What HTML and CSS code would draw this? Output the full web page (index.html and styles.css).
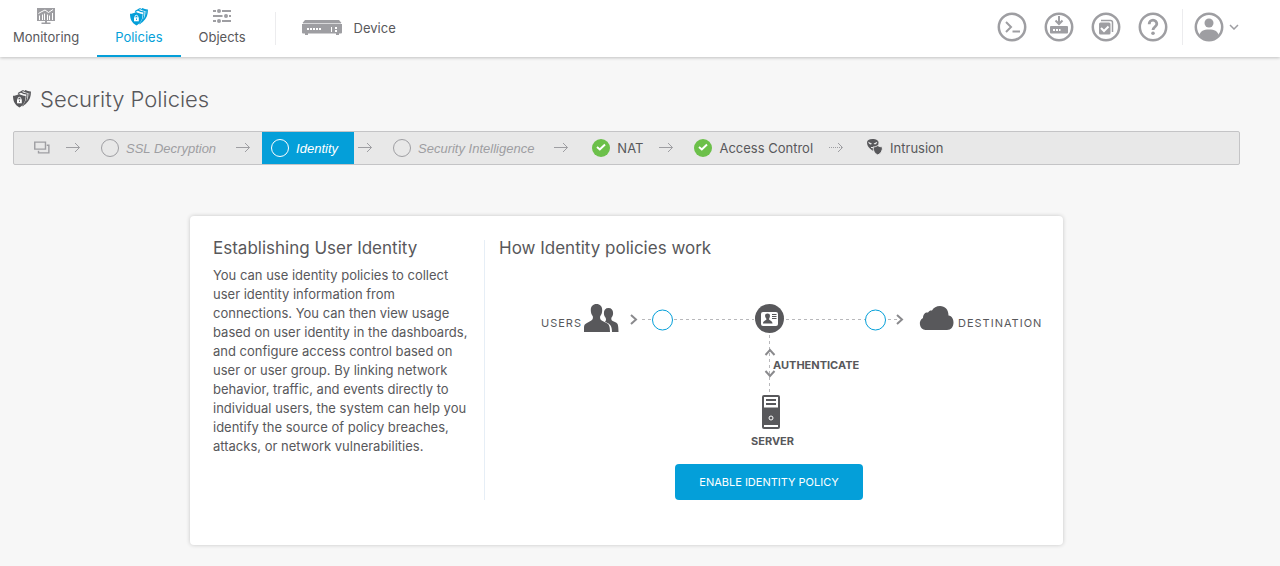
FILE: index.html
```html
<!DOCTYPE html>
<html lang="en">
<head>
<meta charset="utf-8">
<meta name="viewport" content="width=device-width, initial-scale=1">
<title>Security Policies</title>
<link rel="stylesheet" href="styles.css">
</head>
<body>
<svg class="sprite" aria-hidden="true">
  <symbol id="shields" viewBox="0 0 18 18">
    <path fill="currentColor" d="M6 4C4.200 5.200 2 5.700 0 5.800c0 5 1.500 9 6.400 11.600C11.200 15 12.600 11 12.600 6 10.200 5.800 8.200 5.200 6 4z"/>
    <path fill="none" stroke="currentColor" stroke-width="1.100" d="M5 3.400C6 3 7 2.600 7.800 2c2 1.300 4 1.800 6.200 2 0 5-.8 9-4.500 12M8 1.600c.8-.2 1.500-.6 2-1 1.800 1.200 3.700 1.800 6 2 .2 5-1.200 9-4.500 11.700M12 .600c2 1 3.500 1.400 5.400 1.500 0 4-.8 7-3.400 9.800"/>
    <path fill="none" stroke="#fff" stroke-width="1" d="M5 9.500V8.700a1.400 1.400 0 0 1 2.800 0v.8"/>
    <path fill="#fff" d="M4 9.300h4.800v4H4z"/>
    <path fill="currentColor" d="M6 10.500h.900v1.600H6z"/>
  </symbol>
  <symbol id="arrow" viewBox="0 0 14 10">
    <path fill="none" stroke="currentColor" d="M0 4.500h13.500M9 0l4.500 4.500L9 9"/>
  </symbol>
  <symbol id="check" viewBox="0 0 18 18">
    <circle cx="9" cy="9" r="9" fill="#6cc04a"/>
    <path fill="none" stroke="#fff" stroke-width="2" d="M5 8l2.800 2.400L13 5.500"/>
  </symbol>
  <symbol id="ring" viewBox="0 0 18 18">
    <circle cx="9" cy="9" r="8.500" fill="none" stroke="currentColor"/>
  </symbol>
</svg>

<header class="topbar">
  <nav class="nav" aria-label="Main">
    <a class="nav-item nav-first" href="#monitoring">
      <svg width="18" height="17" viewBox="0 0 18 17"><path fill="#9e9ea2" d="M0 0h18v13H0zM8 13h2v2H8zM4.500 14.500h9V16h-9z"/><path fill="none" stroke="#fff" stroke-width="1" d="M2.500 12V7.500M5.500 12V6.500M7.500 12V5.500M10.500 12V6.500M12.500 12V7.500M15.500 12V5"/><path fill="none" stroke="#fff" d="M1.500 5.500L4 4l4-2 3.500 2.500L16 1.500"/></svg>
      <span>Monitoring</span>
    </a>
    <a class="nav-item nav-active" href="#policies" aria-current="page">
      <svg width="18" height="18"><use href="#shields"/></svg>
      <span>Policies</span>
    </a>
    <a class="nav-item" href="#objects">
      <svg width="18" height="17" viewBox="0 0 18 17"><g stroke="#9e9ea2" stroke-width="2"><path d="M0 3h3M9 3h9M0 8h9.500M16 8h2M0 13h3M9 13h9"/></g><g fill="#9e9ea2"><circle cx="6" cy="3" r="2"/><circle cx="13" cy="8" r="2"/><circle cx="6" cy="13" r="2"/></g></svg>
      <span>Objects</span>
    </a>
  </nav>
  <a class="device" href="#device">
    <svg width="40" height="18" viewBox="0 0 40 18"><path fill="#9e9ea2" d="M3 0h34l2.500 3H.500zM0 4h40v8.500a1 1 0 0 1-1 1H1a1 1 0 0 1-1-1zM3 13h3v2H3zM34 13h3v2h-3z"/><path fill="#d8d8da" d="M1 3h38v1H1z"/><path stroke="#fff" stroke-width="2" stroke-dasharray="2 1" d="M5 9h14"/><path fill="#fff" d="M29 7h1v5h-1zM33 7h2v2h-2zM33 10h2v2h-2z"/></svg>
    <span>Device</span>
  </a>
  <div class="tools">
    <button class="tool" type="button" aria-label="CLI console"><svg width="30" height="30" viewBox="0 0 30 30"><circle class="rim" cx="15" cy="15" r="13.200"/><path fill="none" stroke="#9e9ea2" stroke-width="2" d="M9 10l5 5-5 5M15.500 19.500H23"/></svg></button>
    <button class="tool" type="button" aria-label="Deployment"><svg width="30" height="30" viewBox="0 0 30 30"><circle class="rim" cx="15" cy="15" r="13.200"/><rect x="6" y="14" width="18" height="7.500" rx="1" fill="#9e9ea2"/><path fill="none" stroke="#9e9ea2" stroke-width="2" d="M15 4v7.500M11.500 8.500l3.500 3.500 3.500-3.500"/><path fill="#fff" d="M9 17h2v2H9zM12 17h2v2h-2zM15 17h1.500v2H15z"/></svg></button>
    <button class="tool" type="button" aria-label="Task list"><svg width="30" height="30" viewBox="0 0 30 30"><circle class="rim" cx="15" cy="15" r="13.200"/><rect x="8" y="10.500" width="11.500" height="12" rx="1.500" fill="#9e9ea2"/><path fill="none" stroke="#9e9ea2" stroke-width="1.500" d="M10 8.500h9.500a2 2 0 0 1 2 2V20"/><path fill="none" stroke="#fff" stroke-width="2" d="M10 16l3 3 4.500-4.500"/></svg></button>
    <button class="tool" type="button" aria-label="Help"><svg width="30" height="30" viewBox="0 0 30 30"><circle class="rim" cx="15" cy="15" r="13.200"/><path fill="none" stroke="#9e9ea2" stroke-width="2.800" d="M11.200 12.200V12a3.800 3.800 0 0 1 7.600 0c0 2.500-3.800 3-3.800 6"/><circle cx="15" cy="21.200" r="1.800" fill="#9e9ea2"/></svg></button>
    <button class="tool account" type="button" aria-label="Account"><svg width="30" height="30" viewBox="0 0 30 30"><circle cx="15" cy="11" r="4.500" fill="#9e9ea2"/><path fill="#9e9ea2" d="M5.500 23c1-4 4-5.500 9.500-5.500s8.500 1.500 9.500 5.500c-2 3-6 5-9.500 5s-7.500-2-9.500-5z"/><circle class="rim" cx="15" cy="15" r="13.200"/></svg><svg width="10" height="6" viewBox="0 0 10 6"><path fill="none" stroke="#9e9ea2" stroke-width="1.500" d="M1 1l4 4 4-4"/></svg></button>
  </div>
</header>

<main class="page">
  <h1 class="title"><svg width="18" height="18"><use href="#shields"/></svg><span>Security Policies</span></h1>

  <ol class="steps">
    <li class="step"><svg class="muted" width="16" height="14" viewBox="0 0 17 14"><g fill="none" stroke="currentColor" stroke-width="1.500"><path d="M.800.800h11.400v7.400H.800z"/><path d="M13.500 4h2.300v8.200H4.800V10"/></g></svg></li>
    <li class="arrow"><svg width="14" height="10"><use href="#arrow"/></svg></li>
    <li class="step step-off"><a class="step-link" href="#ssl"><svg width="18" height="18"><use href="#ring"/></svg><span>SSL Decryption</span></a></li>
    <li class="arrow"><svg width="14" height="10"><use href="#arrow"/></svg></li>
    <li class="step step-off current"><a class="step-link" href="#identity" aria-current="step"><svg width="18" height="18"><use href="#ring"/></svg><span>Identity</span></a></li>
    <li class="arrow"><svg width="14" height="10"><use href="#arrow"/></svg></li>
    <li class="step step-off"><a class="step-link" href="#intelligence"><svg width="18" height="18"><use href="#ring"/></svg><span>Security Intelligence</span></a></li>
    <li class="arrow"><svg width="14" height="10"><use href="#arrow"/></svg></li>
    <li class="step step-on"><a class="step-link" href="#nat"><svg width="18" height="18"><use href="#check"/></svg><span>NAT</span></a></li>
    <li class="arrow"><svg width="14" height="10"><use href="#arrow"/></svg></li>
    <li class="step"><a class="step-link" href="#access"><svg width="18" height="18"><use href="#check"/></svg><span>Access Control</span></a></li>
    <li class="arrow"><svg width="14" height="10" viewBox="0 0 14 10"><path fill="none" stroke="currentColor" stroke-dasharray="1 1" d="M0 4.500h13"/><path fill="none" stroke="currentColor" d="M9 0l4.500 4.500L9 9"/></svg></li>
    <li class="step step-on"><a class="step-link" href="#intrusion"><svg width="16" height="20" viewBox="0 0 16 20"><path fill="#58585b" d="M5.500 1C9 1 11.500 2.500 11.500 4.500c0 3.500-1.500 6-5 8.500C2.500 11 0 8 0 4.500 0 2.500 2 1 5.500 1z"/><path fill="#e8e8e8" d="M1.200 3.800l3.600 1.700c0 1.300-3 1.500-3.600-1.700zM10.300 3.800L6.700 5.500c0 1.300 3 1.500 3.600-1.700zM4 9h3v1H4z"/><path fill="#58585b" stroke="#e8e8e8" d="M10.800 7.500c1.500 1 2.700 1.300 4.700 1.500 0 4-1.500 6.500-4.700 8-3.300-1.500-4.700-4-4.700-8 2-.2 3.200-.5 4.700-1.500z"/></svg><span>Intrusion</span></a></li>
  </ol>

  <section class="card">
    <div class="about">
      <h2>Establishing User Identity</h2>
      <p>You can use identity policies to collect user identity information from connections. You can then view usage based on user identity in the dashboards, and configure access control based on user or user group. By linking network behavior, traffic, and events directly to individual users, the system can help you identify the source of policy breaches, attacks, or network vulnerabilities.</p>
    </div>
    <div class="how">
      <h2>How Identity policies work</h2>
      <div class="diagram">
        <svg class="art" width="540" height="140" viewBox="0 0 540 140" aria-hidden="true">
          <g fill="#58585b">
            <path d="M108.500 7c3 0 4.600 2 4.600 5 0 2-.7 3.500-1.700 4.700-.3 1.600.1 2.600 1.300 3.200l3.300 1.600c1.800.9 2.500 2.500 2.500 9.500H112c0-5.500-1.500-7.500-4-8.800l-3-1.500c1-.9 1.400-2.400.6-4-1-1.200-1.700-2.700-1.700-4.700 0-3 1.600-5 4.600-5z"/>
            <path d="M96.500 3c3.600 0 5.700 2.300 5.700 6.200 0 2.500-.8 4.500-2 6-.5 2.300.2 3.700 1.900 4.500l4.400 2.300c2.500 1.300 3.500 3 3.500 9H84v-4.500c0-2.300.8-3.400 2.500-4.200l4.400-2.600c1.700-.8 2.400-2.200 1.900-4.500-1.200-1.500-2-3.500-2-6C90.800 5.300 92.900 3 96.500 3z"/>
            <circle cx="269.500" cy="17.500" r="14.500"/>
            <path d="M425.500 29a6.500 6.500 0 0 1-2.500-12c0-4 2.500-6 5-5.500 1-1.800 2.500-2.300 4-2 1.500-3 4.500-4.500 8-4.500 5 0 8.500 3.500 8.500 9.500 3.500.5 5 3.500 5 7 0 4.500-2.500 7.500-6.500 7.500z"/>
            <rect x="262" y="94" width="18" height="34" rx="2"/>
          </g>
          <rect x="261" y="11" width="17" height="14" rx="2" fill="#fff"/>
          <path fill="#58585b" d="M267.500 12.500c3 0 3 3 1.500 5.500 0 1.500 3.500 1.500 3.500 4.500h-9.500c0-3 3.500-3 3.500-4.500-2-2.500-2-5.500 1-5.500zM272 13h4.500v1H272zM272 15h4.500v1H272zM272 17h4.500v1H272z"/>
          <path fill="#fff" d="M264 96h14v10.500h-14zM264 124h14v2h-14z"/>
          <path fill="#58585b" d="M266 98h10v2h-10zM266 102h10v2h-10z"/>
          <circle cx="271" cy="117" r="2" fill="none" stroke="#fff"/>
          <g fill="none" stroke="#b8b8bb" stroke-dasharray="3 3"><path d="M142 18.500h10M174 18.500h80M286 18.500h79M388 18.500h9M269.500 34v60"/></g>
          <g fill="none" stroke="#8a8a8d" stroke-width="2"><path d="M131 14l5 4.500-5 4.500M397 14l5 4.500-5 4.500M265.500 54l4.500-5 4.500 5M265.500 70l4.500 5 4.500-5"/></g>
          <g fill="#fff" stroke="#049fd9"><circle cx="162.500" cy="19" r="10"/><circle cx="375.500" cy="19" r="10"/></g>
        </svg>
        <span class="label users">USERS</span>
        <span class="label destination">DESTINATION</span>
        <strong class="label authenticate">AUTHENTICATE</strong>
        <strong class="label server">SERVER</strong>
        <button class="enable" type="button">ENABLE IDENTITY POLICY</button>
      </div>
    </div>
  </section>
</main>
</body>
</html>
```
FILE: styles.css
```css
* { box-sizing: border-box; }

body {
  margin: 0;
  background: #f7f7f7;
  color: #58585b;
  font: 13px/19px Inter, "Liberation Sans", sans-serif;
}

svg { display: block; flex: none; }
a { color: inherit; text-decoration: none; }
button { font: inherit; border: 0; padding: 0; background: none; cursor: pointer; }
h1, h2, p, ol { margin: 0; padding: 0; font-weight: 400; }
.sprite { position: absolute; width: 0; height: 0; }

.topbar {
  display: flex;
  align-items: center;
  height: 57px;
  padding: 0 41px 0 13px;
  background: #fff;
  box-shadow: 0 1px 3px rgba(0, 0, 0, 0.22);
}
.nav { display: flex; align-self: stretch; }
.nav-item {
  display: flex;
  flex-direction: column;
  align-items: center;
  justify-content: space-between;
  padding: 8px 18px 8px;
  border-bottom: 2px solid transparent;
}
.nav-first { padding-left: 0; }
.nav-active { color: #049fd9; border-color: #049fd9; }
.device {
  display: flex;
  align-items: center;
  gap: 12px;
  height: 33px;
  margin-left: 11px;
  padding-left: 26px;
  border-left: 1px solid #ececee;
}
.tools {
  display: flex;
  align-items: center;
  gap: 17px;
  margin-left: auto;
  padding-bottom: 4px;
}
.tool { display: flex; align-items: center; gap: 5px; }
.rim { fill: none; stroke: #9e9ea2; stroke-width: 2.500; }
.account {
  height: 36px;
  margin-left: -3px;
  padding-left: 11px;
  border-left: 1px solid #ececee;
}

.page { padding: 28px 40px 20px 13px; }
.title {
  display: flex;
  align-items: center;
  gap: 9px;
  font-size: 22px;
  font-weight: 300;
  line-height: 28px;
}
.steps {
  display: flex;
  height: 34px;
  margin-top: 18px;
  padding-left: 11px;
  background: #e8e8e8;
  border: 1px solid #c4c4c6;
  border-radius: 2px;
  list-style: none;
}
.step { display: flex; align-items: center; padding: 0 12px 0 9px; }
.step-link { display: flex; align-items: center; gap: 7px; }
.step-off {
  padding-right: 16px;
  color: #9e9ea2;
  font-family: "Liberation Sans", sans-serif;
  font-style: italic;
}
.step-on { padding-left: 12px; }
.muted { color: #9e9ea2; }
.current { background: #049fd9; color: #fff; }
.arrow { display: flex; align-items: center; padding: 0 12px 0 4px; color: #9e9ea2; }

.card {
  display: flex;
  max-width: 873px;
  margin: 51px auto 0;
  padding: 24px 23px 45px;
  background: #fff;
  border-radius: 4px;
  box-shadow: 0 0 4px rgba(0, 0, 0, 0.2);
}
.card h2 { font-size: 17px; line-height: 17px; }
.about { width: 272px; padding-right: 16px; border-right: 1px solid #e6eef6; }
.about p { margin-top: 9px; }
.how { flex: 1; padding-left: 14px; }

.diagram {
  position: relative;
  width: 541px;
  height: 243px;
}
.art { position: absolute; left: 1px; top: 44px; }
.label { position: absolute; font-size: 11px; line-height: 14px; white-space: nowrap; }
.users { left: 42px; top: 59px; letter-spacing: 1px; }
.destination { left: 459px; top: 59px; letter-spacing: 1px; }
.authenticate { left: 274px; top: 101px; }
.server { left: 252px; top: 177px; }
.enable {
  position: absolute;
  left: 176px;
  top: 207px;
  width: 188px;
  height: 36px;
  border-radius: 4px;
  background: #049fd9;
  color: #fff;
  font-size: 11px;
}
```
